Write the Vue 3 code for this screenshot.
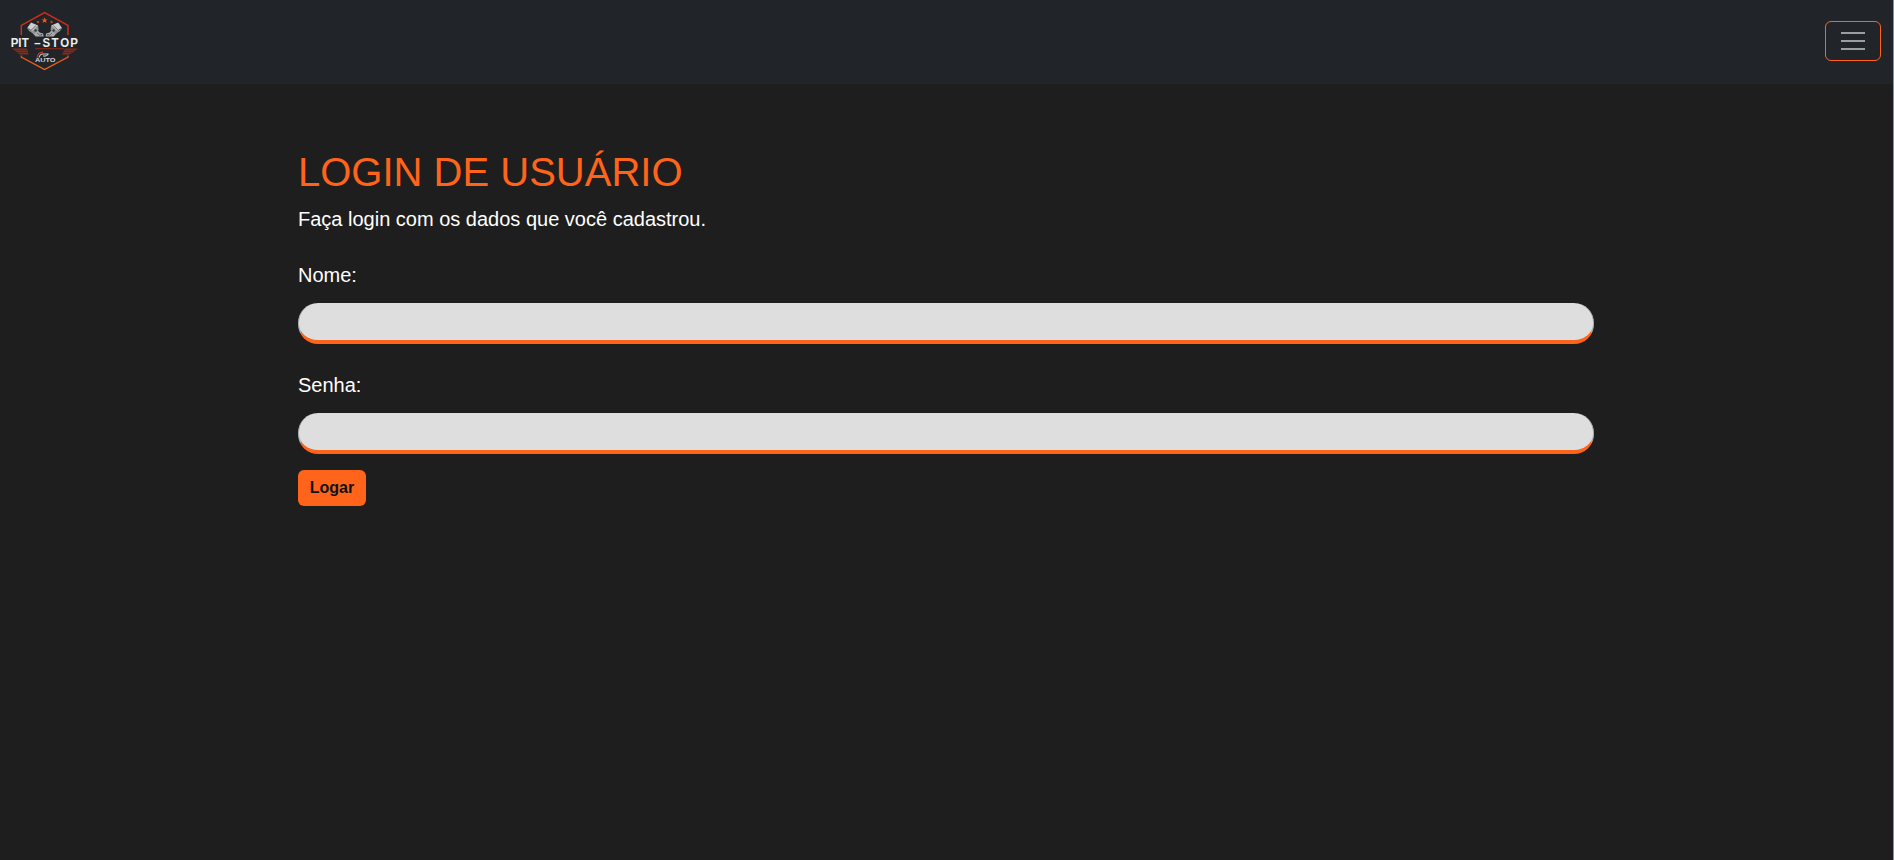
<script setup>
import { ref } from 'vue'

const fields = ref([
  { id: 'nome', label: 'Nome:', type: 'text', value: '' },
  { id: 'senha', label: 'Senha:', type: 'password', value: '' },
])
</script>

<template>
  <div class="page">
    <header class="navbar">
      <a class="brand" href="#" aria-label="Pit-Stop Auto">
        <svg width="72" height="64" viewBox="9 9 72 64">
          <defs>
            <linearGradient id="frame" x1="0" y1="12" x2="0" y2="70" gradientUnits="userSpaceOnUse">
              <stop offset="0" stop-color="#d42a17" />
              <stop offset=".5" stop-color="#cf3417" />
              <stop offset="1" stop-color="#ef6a1c" />
            </linearGradient>
          </defs>
          <g fill="none" stroke="url(#frame)" stroke-width="1.4">
            <path d="M21.300 35V25.500L44.600 12.600L68 25.500V35" />
            <path d="M21.300 55.500V57L44.600 69.500L68 57V55.500" />
          </g>
          <path d="M44.600 17.300l.9 2.100h2.200l-1.800 1.400.7 2.200-2-1.300-2 1.300.7-2.200-1.800-1.400h2.200z" fill="#f0551b" />
          <circle cx="38" cy="22" r="1.200" fill="#b7481d" />
          <circle cx="51.500" cy="22" r="1.200" fill="#b7481d" />
          <g v-for="side in [1, -1]" :key="side" :transform="`translate(44.600 0) scale(${side} 1)`">
            <path d="M9 28L5 32.500L1.500 33.500L1 36.500H9L14 31Z" fill="#a9aaaa" />
            <path d="M6.500 25.500L13.500 22.500L17.500 28L15.500 31L10.500 34L6 30Z" fill="#929394" />
            <path d="M7 25.500L13.500 22.800L16.800 27.500L12.500 31Z" fill="#cfcfcf" />
            <path d="M8.700 25.700L14 30.700" stroke="#4b4d50" stroke-width=".8" />
            <path d="M14.300 29.500L16.500 29" stroke="#55575a" stroke-width=".9" />
            <circle cx="9" cy="30.500" r="1.200" fill="#38393c" />
            <path d="M7.500 33L4 36" stroke="#5a5b5d" stroke-width=".9" />
            <circle cx="3.300" cy="34.800" r=".8" fill="#36383b" />
          </g>
          <path d="M12 48.500H27L28.500 54.500H20L18 53Z" fill="#8b2919" />
          <path d="M78 48.500H65L62 54.500H69L72 53Z" fill="#8b2919" />
          <path d="M14 50.300H27M17 52.500H27.500M64 50.300H76M63 52.500H73" stroke="#3d2523" stroke-width=".6" />
          <path d="M35 48.700H64" stroke="#8b2919" stroke-width="1.100" />
          <text class="logo-name" transform="scale(.85 1)" x="12.600 21.500 25.600 40.300 50 60.700 71 82.600" y="46.800">PIT–STOP</text>
          <path d="M37 57.500Q38 52.500 43 52.200" fill="none" stroke="#bd3b25" stroke-width="1.200" />
          <path d="M39 57.500Q40 54 43 54H48.500M43 55.800Q46 57 48.500 54" fill="none" stroke="#c9c9c9" stroke-width="1.100" />
          <text class="logo-auto" x="35" y="62" textLength="20.500" lengthAdjust="spacingAndGlyphs">AUTO</text>
        </svg>
      </a>
      <button class="toggler" type="button" aria-label="Menu">
        <svg width="30" height="30" viewBox="0 0 30 30">
          <path d="M3 7h24M3 15h24M3 23h24" stroke="#9c9d9e" stroke-width="2" />
        </svg>
      </button>
    </header>

    <main class="content">
      <h1>LOGIN DE USUÁRIO</h1>
      <p>Faça login com os dados que você cadastrou.</p>
      <form @submit.prevent>
        <div v-for="field in fields" :key="field.id" class="field">
          <label :for="field.id">{{ field.label }}</label>
          <input :id="field.id" v-model="field.value" :type="field.type" />
        </div>
        <button class="submit" type="submit">Logar</button>
      </form>
    </main>
  </div>
</template>

<style>
body {
  margin: 0;
  background: #1e1e1e;
}
</style>

<style scoped>
.page {
  box-sizing: border-box;
  min-height: 100vh;
  border-right: 1px solid #669f9d;
  background: #1e1e1e;
  color: #fff;
  font-family: "Liberation Sans", Arial, sans-serif;
}

.page * {
  box-sizing: border-box;
}

.navbar {
  display: flex;
  align-items: center;
  justify-content: space-between;
  height: 84px;
  padding: 0 12px 2px 9px;
  background: #212529;
}

.brand,
.brand svg,
.toggler svg {
  display: block;
}

.logo-name {
  fill: #eeeeee;
  font: bold 13.5px "Liberation Sans", Arial, sans-serif;
}

.logo-auto {
  fill: #d5d5d5;
  font: bold 6px "Liberation Sans", Arial, sans-serif;
}

.toggler {
  width: 56px;
  height: 40px;
  padding: 4px 12px;
  border: 1px solid #ff641a;
  border-radius: 6px;
  background: transparent;
}

.content {
  width: 1296px;
  margin: 64px 0 0 298px;
}

h1 {
  margin: 0 0 8px;
  color: #ff641a;
  font-size: 40px;
  font-weight: 400;
  line-height: 48px;
}

p {
  margin: 0 0 26px;
  font-size: 20px;
  line-height: 30px;
}

.field + .field {
  margin-top: 26px;
}

label {
  display: block;
  margin-bottom: 13px;
  font-size: 20px;
  line-height: 30px;
}

input {
  display: block;
  width: 100%;
  height: 41px;
  padding: 6px 12px;
  border: 1px solid #ced4da;
  border-width: 0 1px 4px;
  border-color: #ced4da #a9afb5 #ff641a;
  border-radius: 20px;
  outline: none;
  background: #dedede;
  color: #212529;
  font: 16px "Liberation Sans", Arial, sans-serif;
}

.submit {
  display: block;
  width: 68px;
  height: 36px;
  margin-top: 16px;
  padding: 0;
  border: 0;
  border-radius: 6px;
  background: #ff641a;
  color: #111;
  font: bold 16px/36px "Liberation Sans", Arial, sans-serif;
}
</style>
